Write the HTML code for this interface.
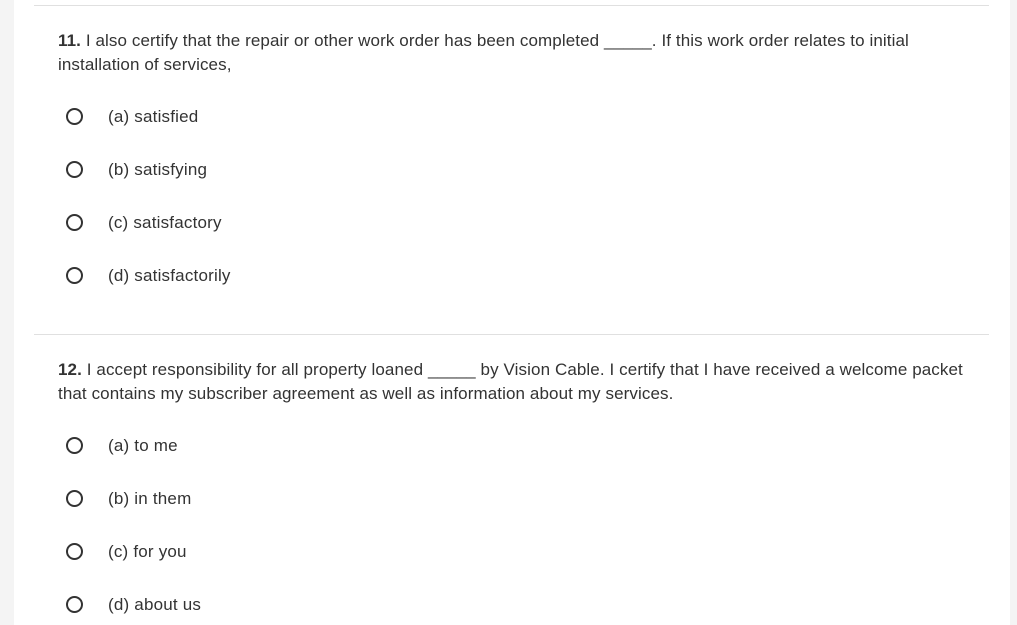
<!DOCTYPE html>
<html><head><style>
body{margin:0;width:1017px;height:625px;background:#f4f4f4;font-family:"Liberation Sans",Arial,sans-serif;color:#333;overflow:hidden;position:relative}
.card{position:absolute;left:14px;top:0;width:996px;height:625px;background:#fff}
.hr{position:absolute;left:34px;width:955px;height:1px;background:#e0e0e0}
.q{position:absolute;left:58px;width:915px;font-size:17px;letter-spacing:0.1px;line-height:24px;color:#333}
.o{position:absolute;left:66px;height:20px;font-size:17px;letter-spacing:0.2px;line-height:20px;color:#333}
.o i{position:absolute;left:0;top:1px;width:13px;height:13px;border:2px solid #333;border-radius:50%}
.o span{position:absolute;left:42px;white-space:nowrap}
</style></head><body>
<div class="card"></div>
<div class="hr" style="top:5px"></div>
<div class="q" style="top:29px"><b>11.</b> I also certify that the repair or other work order has been completed _____. If this work order relates to initial installation of services,</div>
<div class="o" style="top:107px"><i></i><span>(a) satisfied</span></div>
<div class="o" style="top:160px"><i></i><span>(b) satisfying</span></div>
<div class="o" style="top:213px"><i></i><span>(c) satisfactory</span></div>
<div class="o" style="top:266px"><i></i><span>(d) satisfactorily</span></div>
<div class="hr" style="top:334px"></div>
<div class="q" style="top:358px"><b>12.</b> I accept responsibility for all property loaned _____ by Vision Cable. I certify that I have received a welcome packet that contains my subscriber agreement as well as information about my services.</div>
<div class="o" style="top:436px"><i></i><span>(a) to me</span></div>
<div class="o" style="top:489px"><i></i><span>(b) in them</span></div>
<div class="o" style="top:542px"><i></i><span>(c) for you</span></div>
<div class="o" style="top:595px"><i></i><span>(d) about us</span></div>
</body></html>
